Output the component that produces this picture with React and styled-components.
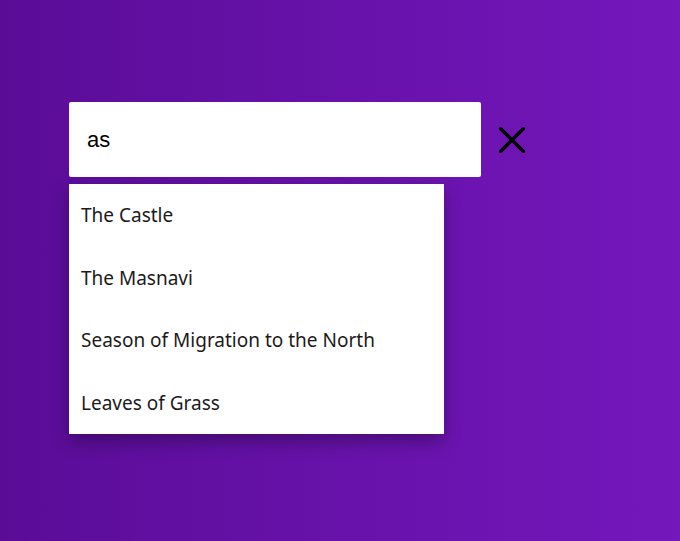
import React, { useState } from "react";
import styled, { createGlobalStyle } from "styled-components";

const GlobalStyle = createGlobalStyle`
  html, body {
    margin: 0;
    padding: 0;
  }
  body {
    min-height: 100vh;
    background: linear-gradient(to right, #5a0c97, #7417bc);
    font-family: "Liberation Sans", Arial, sans-serif;
  }
`;

const Page = styled.div`
  min-height: 100vh;
  padding: 102px 0 0 69px;
  box-sizing: border-box;
`;

const SearchRow = styled.div`
  display: flex;
  align-items: center;
  gap: 17px;
`;

const Input = styled.input`
  box-sizing: border-box;
  width: 412px;
  height: 75px;
  border: none;
  border-radius: 2px;
  padding: 0 18px;
  background: #fff;
  color: #000;
  font-family: "Liberation Sans", Arial, sans-serif;
  font-size: 22px;

  &:focus {
    outline: none;
  }
`;

const ClearButton = styled.button`
  display: flex;
  align-items: center;
  justify-content: center;
  width: 28px;
  height: 28px;
  padding: 0;
  border: none;
  background: transparent;
  cursor: pointer;
`;

const Results = styled.ul`
  list-style: none;
  margin: 7px 0 0;
  padding: 0;
  width: 375px;
  background: #fff;
  box-shadow: 0 8px 16px rgba(0, 0, 0, 0.3);
`;

const Result = styled.li`
  display: flex;
  align-items: center;
  height: 62.5px;
  padding: 0 12px;
  font-family: "Noto Sans", "Open Sans", sans-serif;
  font-size: 19px;
  color: #1c1a1a;
  cursor: pointer;
`;

const books = [
  "The Castle",
  "The Masnavi",
  "Season of Migration to the North",
  "Leaves of Grass"
];

const App = () => {
  const [query, setQuery] = useState("as");

  return (
    <Page>
      <GlobalStyle />
      <SearchRow>
        <Input
          type="text"
          autoComplete="off"
          value={query}
          onChange={e => setQuery(e.target.value)}
        />
        <ClearButton onClick={() => setQuery("")}>
          <svg width="26" height="26" viewBox="0 0 26 26">
            <path
              d="M1.5 1.5L24.5 24.5M24.5 1.5L1.5 24.5"
              stroke="#000"
              strokeWidth="3.4"
              strokeLinecap="square"
            />
          </svg>
        </ClearButton>
      </SearchRow>
      <Results>
        {books.map(title => (
          <Result key={title}>{title}</Result>
        ))}
      </Results>
    </Page>
  );
};

export default App;
